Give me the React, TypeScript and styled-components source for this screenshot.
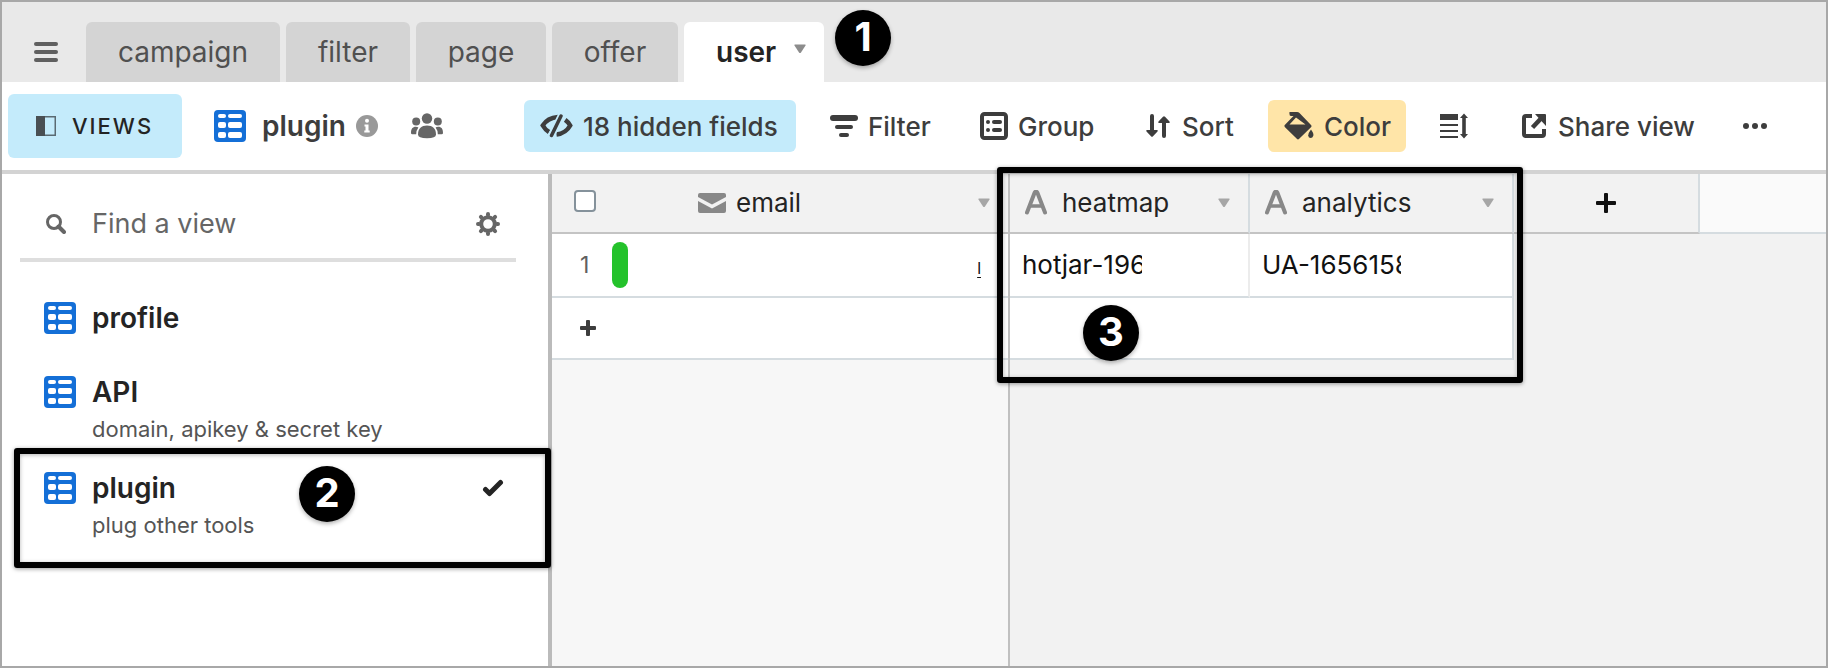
import React from "react";
import styled, { createGlobalStyle } from "styled-components";

const colors = {
  ink: "#242424",
  tool: "#3d3d3d",
  muted: "#666666",
  faint: "#999999",
  blue: "#146fd7",
  sky: "#c4ebfb",
  sand: "#ffe5a8",
  rule: "#d3d3d3",
  cell: "#d5dce0",
  pane: "#f2f2f2",
};

const GlobalStyle = createGlobalStyle`
  *, *::before, *::after { box-sizing: border-box; }
  body { margin: 0; font-family: Inter, "Liberation Sans", sans-serif; color: ${colors.ink}; }
  button, input { font: inherit; color: inherit; }
  button { border: 0; padding: 0; background: none; cursor: pointer; }
  svg { display: block; flex: none; }
`;

const Page = styled.div`
  min-height: 100vh;
  display: flex;
  flex-direction: column;
  border: 2px solid #a8a8a8;
  background: #fff;
`;

const TabBar = styled.header`
  display: flex;
  align-items: flex-end;
  height: 80px;
  background: #e9e9e9;
`;

const MenuButton = styled.button`
  display: flex;
  align-items: center;
  justify-content: center;
  width: 84px;
  height: 60px;
  padding-left: 4px;
  color: #606060;
`;

const Tabs = styled.nav`
  display: flex;
  gap: 6px;
`;

const Tab = styled.button<{ $active?: boolean; $width: number }>`
  display: flex;
  align-items: center;
  justify-content: ${(p) => (p.$active ? "space-between" : "center")};
  width: ${(p) => p.$width}px;
  height: 60px;
  padding: ${(p) => (p.$active ? "0 18px 0 32px" : "0")};
  border-radius: 6px 6px 0 0;
  background: ${(p) => (p.$active ? "#fff" : "#d4d4d4")};
  color: ${(p) => (p.$active ? colors.ink : "#505050")};
  font-size: 28px;
  line-height: 32px;
  font-weight: ${(p) => (p.$active ? 600 : 400)};
`;

const Badge = styled.span<{ $left: number; $top: number }>`
  position: absolute;
  left: ${(p) => p.$left}px;
  top: ${(p) => p.$top}px;
  width: 56px;
  height: 56px;
  border-radius: 50%;
  background: #000;
  color: #fff;
  font-size: 40px;
  line-height: 54px;
  font-weight: 700;
  text-align: center;
  box-shadow: 0 2px 4px rgba(0, 0, 0, 0.3);
  z-index: 3;
`;

const Anchor = styled.div`
  position: relative;
`;

const Frame = styled.span<{ $left: number; $top: number; $width: number; $height: number }>`
  position: absolute;
  left: ${(p) => p.$left}px;
  top: ${(p) => p.$top}px;
  width: ${(p) => p.$width}px;
  height: ${(p) => p.$height}px;
  border: 6px solid #000;
  border-radius: 3px;
  box-shadow: 0 1px 4px rgba(0, 0, 0, 0.4), inset 0 1px 4px rgba(0, 0, 0, 0.3);
  pointer-events: none;
  z-index: 2;
`;

const Toolbar = styled.div`
  display: flex;
  align-items: center;
  height: 92px;
  padding: 0 6px;
  border-bottom: 4px solid ${colors.rule};
`;

const ViewsButton = styled.button`
  display: flex;
  align-items: center;
  gap: 16px;
  width: 174px;
  height: 64px;
  padding: 0 28px;
  border-radius: 6px;
  background: ${colors.sky};
  color: ${colors.ink};
  font-size: 22px;
  font-weight: 500;
  letter-spacing: 2px;
`;

const ViewTitle = styled.div`
  display: flex;
  align-items: center;
  width: 342px;
  padding-left: 32px;
`;

const ViewName = styled.h1`
  margin: 0 10px 0 16px;
  color: ${colors.tool};
  font-size: 28px;
  line-height: 32px;
  font-weight: 600;
`;

const Collaborators = styled.button`
  margin-left: 33px;
  color: #666;
`;

const Tools = styled.div`
  display: flex;
  align-items: center;
  gap: 18px;
`;

const ToolButton = styled.button<{ $tint?: string; $width: number }>`
  display: flex;
  align-items: center;
  gap: 10px;
  width: ${(p) => p.$width}px;
  height: 52px;
  padding: 0 16px;
  border-radius: 6px;
  background: ${(p) => p.$tint ?? "transparent"};
  color: ${colors.tool};
  font-size: 26px;
  font-weight: 500;
  white-space: nowrap;
`;

const Body = styled.div`
  flex: 1;
  display: flex;
`;

const Sidebar = styled.aside`
  flex: none;
  width: 550px;
  border-right: 4px solid #bbb;
`;

const Search = styled.div`
  display: flex;
  align-items: center;
  height: 88px;
  margin: 0 32px 0 18px;
  padding: 16px 16px 0 26px;
  border-bottom: 4px solid #dedede;
  color: ${colors.muted};
`;

const SearchInput = styled.input`
  flex: 1;
  min-width: 0;
  margin-left: 26px;
  padding: 0;
  border: 0;
  outline: 0;
  background: none;
  font-size: 27px;
  line-height: 32px;
  &::placeholder { color: ${colors.muted}; opacity: 1; }
`;

const ViewList = styled.ul`
  list-style: none;
  margin: 0;
  padding: 40px 0 0;
`;

const ViewItem = styled.li`
  position: relative;
  padding: 0 42px 28px;
`;

const ViewLink = styled.a`
  display: grid;
  grid-template-columns: 32px 1fr 24px;
  column-gap: 16px;
  align-items: center;
  align-content: start;
  min-height: 46px;
  color: ${colors.ink};
  text-decoration: none;
`;

const ViewLabel = styled.span`
  font-size: 28px;
  line-height: 32px;
  font-weight: 600;
`;

const ViewNote = styled.span`
  grid-column: 2;
  margin-top: 6px;
  color: #555;
  font-size: 22px;
  line-height: 30px;
`;

const GridArea = styled.main`
  position: relative;
  flex: 1;
  min-width: 0;
  display: flex;
`;

const Pane = styled.div<{ $frozen?: boolean }>`
  flex: ${(p) => (p.$frozen ? "0 0 458px" : "1")};
  min-width: 0;
  background: ${(p) => (p.$frozen ? "#f7f7f7" : colors.pane)};
  border-right: ${(p) => (p.$frozen ? "2px solid #c0c0c0" : "0")};
`;

const Table = styled.table`
  width: 100%;
  table-layout: fixed;
  border-collapse: separate;
  border-spacing: 0;
`;

const Th = styled.th<{ $width?: number; $rest?: boolean; $edge?: boolean }>`
  width: ${(p) => (p.$width ? `${p.$width}px` : "auto")};
  height: 60px;
  padding: 0;
  background: ${(p) => (p.$rest ? "#fafafa" : colors.pane)};
  border-bottom: 2px solid ${(p) => (p.$rest ? colors.cell : "#c4c4c4")};
  border-right: ${(p) => (p.$edge ? `2px solid ${colors.cell}` : "0")};
  font-weight: 400;
  text-align: left;
`;

const HeadCell = styled.div<{ $indent: number; $gap: number }>`
  display: flex;
  align-items: center;
  gap: ${(p) => p.$gap}px;
  padding: 0 18px 0 ${(p) => p.$indent}px;
  color: ${colors.ink};
  font-size: 26px;
  line-height: 32px;
  svg:first-child { color: #888; }
  svg:last-child { margin-left: auto; color: #a6a6a6; }
`;

const Td = styled.td<{ $edge?: string; $h?: number; $blank?: boolean }>`
  height: ${(p) => p.$h ?? 64}px;
  padding: 0;
  background: ${(p) => (p.$blank ? "transparent" : "#fff")};
  border-bottom: ${(p) => (p.$blank ? "0" : `2px solid ${colors.cell}`)};
  border-right: ${(p) => (p.$edge ? `2px solid ${p.$edge}` : "0")};
`;

const RowHead = styled.div`
  display: flex;
  align-items: center;
  gap: 20px;
  padding-left: 28px;
  color: #606060;
  font-size: 23px;
`;

const RowNumber = styled.span`
  width: 12px;
`;

const ColorPill = styled.span`
  width: 16px;
  height: 46px;
  border-radius: 8px;
  background: #24c22b;
`;

const Check = styled.input`
  display: block;
  appearance: none;
  width: 22px;
  height: 22px;
  margin: 0 0 4px 22px;
  border: 2px solid #85929b;
  border-radius: 4px;
  background: #fff;
`;

const MailLink = styled.a`
  display: block;
  margin: 6px 27px 0 0;
  color: #111;
  font-size: 16px;
  line-height: 20px;
  text-align: right;
  text-underline-offset: 3px;
`;

const Clip = styled.span<{ $width: number }>`
  display: block;
  width: ${(p) => p.$width}px;
  margin-left: 12px;
  overflow: hidden;
  color: #111;
  font-size: 26px;
  line-height: 36px;
  white-space: nowrap;
`;

const AddButton = styled.button<{ $indent: number }>`
  display: block;
  margin-left: ${(p) => p.$indent}px;
  color: ${colors.tool};
`;

const AddFieldButton = styled.button`
  display: block;
  margin: 0 auto;
  color: #111;
`;

const Caret = () => (
  <svg width="12" height="10" viewBox="0 0 12 10" aria-hidden="true">
    <path d="M1 0.500h10q1 0 .5 1L7 8.600q-1 1-2 0L.5 1.500Q0 .5 1 .5z" fill="currentColor" />
  </svg>
);

const GridIcon = () => (
  <svg width="32" height="32" viewBox="0 0 32 32" aria-hidden="true">
    <rect width="32" height="32" rx="4" fill={colors.blue} />
    <g fill="#fff">
      <rect x="4" y="4" width="8" height="4" rx="2" />
      <rect x="14" y="4" width="14" height="4" rx="2" />
      <rect x="4" y="12" width="8" height="6" rx="2" />
      <rect x="14" y="12" width="14" height="6" rx="2" />
      <rect x="4" y="22" width="8" height="6" rx="2" />
      <rect x="14" y="22" width="14" height="6" rx="2" />
    </g>
  </svg>
);

const LetterAIcon = () => (
  <svg width="22" height="26" viewBox="0 0 22 26" fill="none" stroke="currentColor" strokeLinecap="round" strokeLinejoin="round" aria-hidden="true">
    <path d="M2 22.500L9.500 3q1.500-3 3 0L20 22.500" strokeWidth="4" />
    <path d="M6 16h10" strokeWidth="3.500" />
  </svg>
);

const PlusIcon = ({ size, bar }: { size: number; bar: number }) => (
  <svg width={size} height={size} viewBox={`0 0 ${size} ${size}`} fill="currentColor" aria-hidden="true">
    <rect x={(size - bar) / 2} width={bar} height={size} rx="1" />
    <rect y={(size - bar) / 2} width={size} height={bar} rx="1" />
  </svg>
);

const tabs = [
  { name: "campaign", width: 194 },
  { name: "filter", width: 124 },
  { name: "page", width: 130 },
  { name: "offer", width: 126 },
];

const fields = [
  { name: "heatmap", width: 240 },
  { name: "analytics", width: 264 },
];

export default function App() {
  return (
    <Page>
      <GlobalStyle />
      <TabBar>
        <MenuButton aria-label="Menu">
          <svg width="24" height="20" viewBox="0 0 24 20" fill="currentColor">
            <rect width="24" height="4" rx="2" />
            <rect y="8" width="24" height="4" rx="2" />
            <rect y="16" width="24" height="4" rx="2" />
          </svg>
        </MenuButton>
        <Tabs>
          {tabs.map((t) => (
            <Tab key={t.name} $width={t.width}>{t.name}</Tab>
          ))}
          <Anchor>
            <Tab $active $width={140}>
              user
              <svg width="12" height="16" viewBox="0 0 12 16" fill="#8c8c8c">
                <path d="M1 0.500h10q1 0 .5 1L7 8.600q-1 1-2 0L.5 1.500Q0 .5 1 .5z" />
              </svg>
            </Tab>
            <Badge $left={151} $top={-12}>1</Badge>
          </Anchor>
        </Tabs>
      </TabBar>

      <Toolbar>
        <ViewsButton>
          <svg width="20" height="20" viewBox="0 0 20 20">
            <rect x=".75" y=".75" width="18.500" height="18.500" fill="none" stroke="#5a6a72" strokeWidth="1.500" />
            <rect width="9" height="20" fill="#494f53" />
          </svg>
          VIEWS
        </ViewsButton>
        <ViewTitle>
          <GridIcon />
          <ViewName>plugin</ViewName>
          <svg width="22" height="22" viewBox="0 0 22 22" aria-hidden="true">
            <circle cx="11" cy="11" r="11" fill={colors.faint} />
            <circle cx="11" cy="5.800" r="2" fill="#fff" />
            <path d="M8.500 9.500h4v6h1.200v2h-5.400v-2h1.200v-4h-1z" fill="#fff" />
          </svg>
          <Collaborators aria-label="Collaborators">
            <svg width="32" height="26" viewBox="0 0 32 26" fill="currentColor">
              <circle cx="16" cy="5.500" r="5.200" />
              <circle cx="5.200" cy="8.500" r="4" />
              <circle cx="26.800" cy="8.500" r="4" />
              <path d="M7 21.500c0-6 3.500-9 9-9s9 3 9 9q0 3.800-9 3.800t-9-3.800z" />
              <path d="M0 20c0-4 1.500-6.200 4.800-6.200q1.700 0 2.600.7-2.200 2.800-2.200 6.700H1.400Q0 21.200 0 20z" />
              <path d="M32 20c0-4-1.500-6.200-4.800-6.200q-1.700 0-2.600.7 2.200 2.800 2.200 6.700h3.800q1.400 0 1.400-1.200z" />
            </svg>
          </Collaborators>
        </ViewTitle>
        <Tools>
          <ToolButton $tint={colors.sky} $width={272}>
            <svg width="33" height="24" viewBox="0 0 33 24" fill="none" stroke="currentColor" strokeLinecap="round">
              <path d="M18 3C11 3.500 5.500 7 2.800 11.500 4.500 14.500 6.500 16.500 9 18" strokeWidth="4.500" strokeLinecap="butt" />
              <path d="M16.500 20.500c6.500-.8 11.500-5 13.700-9-1.200-2.200-3-4.200-5-5.600" strokeWidth="4.500" strokeLinecap="butt" />
              <path d="M21 2L11.500 21.500" stroke={colors.sky} strokeWidth="7" strokeLinecap="butt" />
              <path d="M21 2L11.500 21.500" strokeWidth="3.500" />
            </svg>
            18 hidden fields
          </ToolButton>
          <ToolButton $width={132}>
            <svg width="28" height="22" viewBox="0 0 28 22" fill="currentColor">
              <rect width="28" height="6" rx="3" />
              <rect x="5" y="10" width="18" height="4" rx="2" />
              <rect x="9" y="18" width="10" height="4" rx="2" />
            </svg>
            Filter
          </ToolButton>
          <ToolButton $width={146}>
            <svg width="28" height="28" viewBox="0 0 28 28" fill="currentColor">
              <rect x="2" y="2" width="24" height="24" rx="2.500" fill="none" stroke="currentColor" strokeWidth="4" />
              <circle cx="8" cy="10" r="2" />
              <circle cx="8" cy="18" r="2" />
              <rect x="12" y="8" width="10" height="4" rx="2" />
              <rect x="12" y="16" width="10" height="4" rx="2" />
            </svg>
            Group
          </ToolButton>
          <ToolButton $width={122}>
            <svg width="28" height="24" viewBox="0 0 28 24" fill="currentColor">
              <path d="M6 2q0-2 2-2t2 2v14h3q1.500.2.500 1.500l-4.500 4.700q-1 1-2 0L2.500 17.500Q1.500 16.200 3 16h3z" />
              <path d="M18 22q0 2 2 2t2-2V9h3q1.500-.2.500-1.500L21 2.800q-1-1-2 0l-4.500 4.700Q13.500 8.800 15 9h3z" />
            </svg>
            Sort
          </ToolButton>
          <ToolButton $tint={colors.sand} $width={138}>
            <svg width="30" height="28" viewBox="0 0 30 28" fill="currentColor">
              <path fillRule="evenodd" d="M5.500 0H13q1.500 0 2.500 1L27 13q1 1.200 0 2.200L15.200 26.800q-1.200 1.200-2.400 0L1 15.200q-1.200-1.200 0-2.400L9.500 4H7Q5 4 5.500 0zM12 5.500L5.500 12.500h16z" />
              <path d="M27 17.500q3 4 2.300 6.200-.8 2.300-2.600 2.300-2.200 0-2.500-2.500Q24.200 21 27 17.500z" />
            </svg>
            Color
          </ToolButton>
          <ToolButton $width={60} aria-label="Row height">
            <svg width="28" height="26" viewBox="0 0 28 26" fill="currentColor">
              <path d="M0 1h18v6H0zM0 11h18v2H0zM0 17h18v2H0zM0 23h18v2H0z" />
              <path d="M24 0.500l4 4.500h-2.200v16H28l-4 4.500-4-4.500h2.200V5H20z" />
            </svg>
          </ToolButton>
          <ToolButton $width={207}>
            <svg width="30" height="24" viewBox="0 0 30 24" fill="none" stroke="currentColor">
              <path d="M14 2H8Q6 2 6 4v16q0 2 2 2h16q2 0 2-2v-5" strokeWidth="4" />
              <path d="M14.500 13.500l8-8.500" strokeWidth="4.500" />
              <path d="M17 0h10q1 0 1 1v11z" fill="currentColor" stroke="none" />
            </svg>
            Share view
          </ToolButton>
          <ToolButton $width={56} aria-label="More">
            <svg width="24" height="6" viewBox="0 0 24 6" fill="currentColor">
              <circle cx="3" cy="3" r="3" />
              <circle cx="12" cy="3" r="3" />
              <circle cx="21" cy="3" r="3" />
            </svg>
          </ToolButton>
        </Tools>
      </Toolbar>

      <Body>
        <Sidebar>
          <Search>
            <svg width="20" height="20" viewBox="0 0 20 20" fill="none" stroke="currentColor" aria-hidden="true">
              <circle cx="8" cy="8" r="6.500" strokeWidth="3" />
              <path d="M12.500 12.500l5.500 5.500" strokeWidth="4" strokeLinecap="round" />
            </svg>
            <SearchInput aria-label="Find a view" placeholder="Find a view" />
            <button aria-label="View settings">
              <svg width="24" height="24" viewBox="0 0 24 24" fill="none" stroke="currentColor">
                <circle cx="12" cy="12" r="6.800" strokeWidth="4" />
                <g strokeWidth="4" strokeLinecap="round">
                  <path d="M12 2v1M12 21v1M2 12h1M21 12h1M4.900 4.900l.7.7M18.400 18.400l.7.7M4.900 19.100l.7-.7M18.400 5.600l.7-.7" />
                </g>
              </svg>
            </button>
          </Search>
          <ViewList>
            <ViewItem>
              <ViewLink href="#profile">
                <GridIcon />
                <ViewLabel>profile</ViewLabel>
              </ViewLink>
            </ViewItem>
            <ViewItem>
              <ViewLink href="#api">
                <GridIcon />
                <ViewLabel>API</ViewLabel>
                <ViewNote>domain, apikey &amp; secret key</ViewNote>
              </ViewLink>
            </ViewItem>
            <ViewItem>
              <ViewLink href="#plugin" aria-current="page">
                <GridIcon />
                <ViewLabel>plugin</ViewLabel>
                <svg width="22" height="18" viewBox="0 0 22 18" fill="none" stroke="currentColor" strokeLinecap="round" strokeLinejoin="round">
                  <path d="M3.500 10.500l4 4L18.500 3.500" strokeWidth="5" />
                </svg>
                <ViewNote>plug other tools</ViewNote>
              </ViewLink>
              <Frame $left={12} $top={-24} $width={537} $height={120} />
              <Badge $left={297} $top={-6}>2</Badge>
            </ViewItem>
          </ViewList>
        </Sidebar>

        <GridArea>
          <Pane $frozen>
            <Table>
              <thead>
                <tr>
                  <Th $width={100}>
                    <Check type="checkbox" aria-label="Select all rows" />
                  </Th>
                  <Th>
                    <HeadCell $indent={46} $gap={10}>
                      <svg width="28" height="20" viewBox="0 0 28 20" fill="currentColor" aria-hidden="true">
                        <path d="M2 0h24q2 0 2 2v2L14 11.500 0 4V2Q0 0 2 0z" />
                        <path d="M0 8l14 7.500L28 8v10q0 2-2 2H2q-2 0-2-2z" />
                      </svg>
                      email
                      <Caret />
                    </HeadCell>
                  </Th>
                </tr>
              </thead>
              <tbody>
                <tr>
                  <Td>
                    <RowHead>
                      <RowNumber>1</RowNumber>
                      <ColorPill />
                    </RowHead>
                  </Td>
                  <Td>
                    <MailLink href="#email">l</MailLink>
                  </Td>
                </tr>
                <tr>
                  <Td $h={62} colSpan={2}>
                    <AddButton $indent={28} aria-label="Add row">
                      <PlusIcon size={16} bar={4} />
                    </AddButton>
                  </Td>
                </tr>
              </tbody>
            </Table>
          </Pane>
          <Pane>
            <Table>
              <thead>
                <tr>
                  {fields.map((f) => (
                    <Th key={f.name} $width={f.width} $edge>
                      <HeadCell $indent={15} $gap={15}>
                        <LetterAIcon />
                        {f.name}
                        <Caret />
                      </HeadCell>
                    </Th>
                  ))}
                  <Th $width={186} $edge>
                    <AddFieldButton aria-label="Add field">
                      <PlusIcon size={20} bar={4} />
                    </AddFieldButton>
                  </Th>
                  <Th $rest />
                </tr>
              </thead>
              <tbody>
                <tr>
                  <Td $edge="#ececec">
                    <Clip $width={120}>hotjar-196</Clip>
                  </Td>
                  <Td $edge={colors.cell}>
                    <Clip $width={139}>UA-1656158</Clip>
                  </Td>
                  <Td $blank colSpan={2} />
                </tr>
                <tr>
                  <Td $h={62} $edge={colors.cell} colSpan={2} />
                  <Td $h={62} $blank colSpan={2} />
                </tr>
              </tbody>
            </Table>
          </Pane>
          <Frame $left={445} $top={-7} $width={526} $height={216} />
          <Badge $left={531} $top={131}>3</Badge>
        </GridArea>
      </Body>
    </Page>
  );
}
